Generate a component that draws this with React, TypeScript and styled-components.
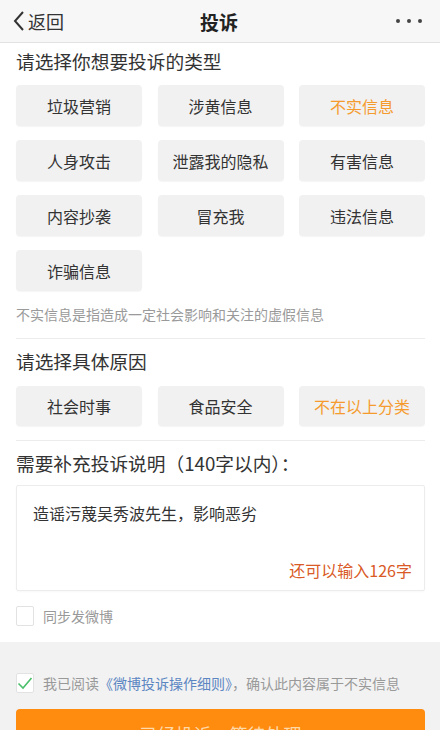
import React from "react";
import styled, { createGlobalStyle } from "styled-components";

const Global = createGlobalStyle`
  html, body { margin: 0; padding: 0; background: #fff; }
  body { font-family: "Noto Sans CJK SC", "Noto Sans", sans-serif; }
  * { box-sizing: border-box; }
`;

const Page = styled.div`
  width: 440px;
  height: 730px;
  overflow: hidden;
  display: flex;
  flex-direction: column;
  background: #fff;
  color: #333;
`;

const NavBar = styled.header`
  height: 43px;
  flex-shrink: 0;
  display: grid;
  grid-template-columns: 1fr auto 1fr;
  align-items: center;
  background: #f7f7f7;
  border-bottom: 1px solid #e2e2e2;
  padding: 0 14px 0 12px;
`;

const Back = styled.div`
  display: flex;
  align-items: center;
  gap: 2px;
  font-size: 18px;
  color: #333;
`;

const Title = styled.div`
  font-size: 19px;
  font-weight: 700;
  color: #222;
`;

const More = styled.div`
  justify-self: end;
  display: flex;
  gap: 7px;
  padding-right: 4px;
`;

const Dot = styled.span`
  width: 4px;
  height: 4px;
  border-radius: 50%;
  background: #444;
`;

const Body = styled.main`
  padding: 0 15px 0 16px;
  display: flex;
  flex-direction: column;
`;

const SectionTitle = styled.div<{ $mt: number }>`
  margin-top: ${(p) => p.$mt}px;
  font-size: 18.7px;
  line-height: 26px;
  color: #333;
  white-space: nowrap;
`;

const OptionGrid = styled.div<{ $mt: number }>`
  margin-top: ${(p) => p.$mt}px;
  display: grid;
  grid-template-columns: repeat(3, 126px);
  column-gap: 15.5px;
  row-gap: 14px;
`;

const Option = styled.div<{ $active?: boolean; $h: number }>`
  height: ${(p) => p.$h}px;
  display: flex;
  align-items: center;
  justify-content: center;
  background: #f1f1f1;
  border-radius: 4px;
  box-shadow: 0 1px 1px rgba(0, 0, 0, 0.04);
  font-size: 16px;
  color: ${(p) => (p.$active ? "#f59b2e" : "#333")};
`;

const Hint = styled.div`
  margin-top: 13px;
  font-size: 14px;
  line-height: 20px;
  color: #9a9a9a;
  white-space: nowrap;
`;

const Divider = styled.div<{ $mt: number }>`
  margin-top: ${(p) => p.$mt}px;
  height: 1px;
  background: #ececec;
`;

const TextBox = styled.div`
  margin-top: 9px;
  height: 106px;
  border: 1px solid #ececec;
  border-radius: 2px;
  box-shadow: 0 1px 2px rgba(0, 0, 0, 0.03);
  padding: 15px 12px 8px 16px;
  display: flex;
  flex-direction: column;
  justify-content: space-between;
`;

const BoxText = styled.div`
  font-size: 16px;
  line-height: 24px;
  color: #333;
`;

const Counter = styled.div`
  align-self: flex-end;
  font-size: 16px;
  line-height: 24px;
  color: #d95a26;
`;

const CheckRow = styled.label<{ $mt: number }>`
  margin-top: ${(p) => p.$mt}px;
  display: flex;
  align-items: center;
  gap: 9px;
  font-size: 14px;
  color: #999;
  white-space: nowrap;
`;

const Box = styled.span`
  width: 18px;
  height: 20px;
  flex-shrink: 0;
  border: 1px solid #e2e2e2;
  border-radius: 2px;
  background: #fff;
  display: flex;
  align-items: center;
  justify-content: center;
`;

const Footer = styled.footer`
  margin-top: 16px;
  flex: 1;
  background: #f2f2f2;
  padding: 0 15px 0 16px;
  display: flex;
  flex-direction: column;
`;

const Link = styled.span`
  color: #5b86c2;
`;

const Submit = styled.div`
  margin-top: 16px;
  flex: 1;
  background: #ff8b0f;
  border-radius: 4px 4px 0 0;
  display: flex;
  justify-content: center;
  padding-top: 12px;
  font-size: 18px;
  color: #ffd9a8;
`;

const types = [
  "垃圾营销",
  "涉黄信息",
  "不实信息",
  "人身攻击",
  "泄露我的隐私",
  "有害信息",
  "内容抄袭",
  "冒充我",
  "违法信息",
  "诈骗信息",
];

const reasons = ["社会时事", "食品安全", "不在以上分类"];

export default function App() {
  return (
    <>
      <Global />
      <Page>
        <NavBar>
          <Back>
            <svg width="14" height="22" viewBox="0 0 14 22">
              <path d="M11 2 L3 11 L11 20" fill="none" stroke="#333" strokeWidth="2" />
            </svg>
            返回
          </Back>
          <Title>投诉</Title>
          <More>
            <Dot />
            <Dot />
            <Dot />
          </More>
        </NavBar>
        <Body>
          <SectionTitle $mt={5}>请选择你想要投诉的类型</SectionTitle>
          <OptionGrid $mt={11}>
            {types.map((t) => (
              <Option key={t} $h={41} $active={t === "不实信息"}>
                {t}
              </Option>
            ))}
          </OptionGrid>
          <Hint>不实信息是指造成一定社会影响和关注的虚假信息</Hint>
          <Divider $mt={14} />
          <SectionTitle $mt={9}>请选择具体原因</SectionTitle>
          <OptionGrid $mt={12}>
            {reasons.map((t) => (
              <Option key={t} $h={40} $active={t === "不在以上分类"}>
                {t}
              </Option>
            ))}
          </OptionGrid>
          <Divider $mt={14} />
          <SectionTitle $mt={9}>需要补充投诉说明（140字以内）：</SectionTitle>
          <TextBox>
            <BoxText>造谣污蔑吴秀波先生，影响恶劣</BoxText>
            <Counter>还可以输入126字</Counter>
          </TextBox>
          <CheckRow $mt={15}>
            <Box />
            同步发微博
          </CheckRow>
        </Body>
        <Footer>
          <CheckRow $mt={31}>
            <Box>
              <svg width="16" height="14" viewBox="0 0 16 14">
                <path d="M1.5 7.5 L6 12 L14.5 2" fill="none" stroke="#4cbf6a" strokeWidth="1.6" />
              </svg>
            </Box>
            <span>
              我已阅读<Link>《微博投诉操作细则》</Link>，确认此内容属于不实信息
            </span>
          </CheckRow>
          <Submit>已经投诉，等待处理</Submit>
        </Footer>
      </Page>
    </>
  );
}
